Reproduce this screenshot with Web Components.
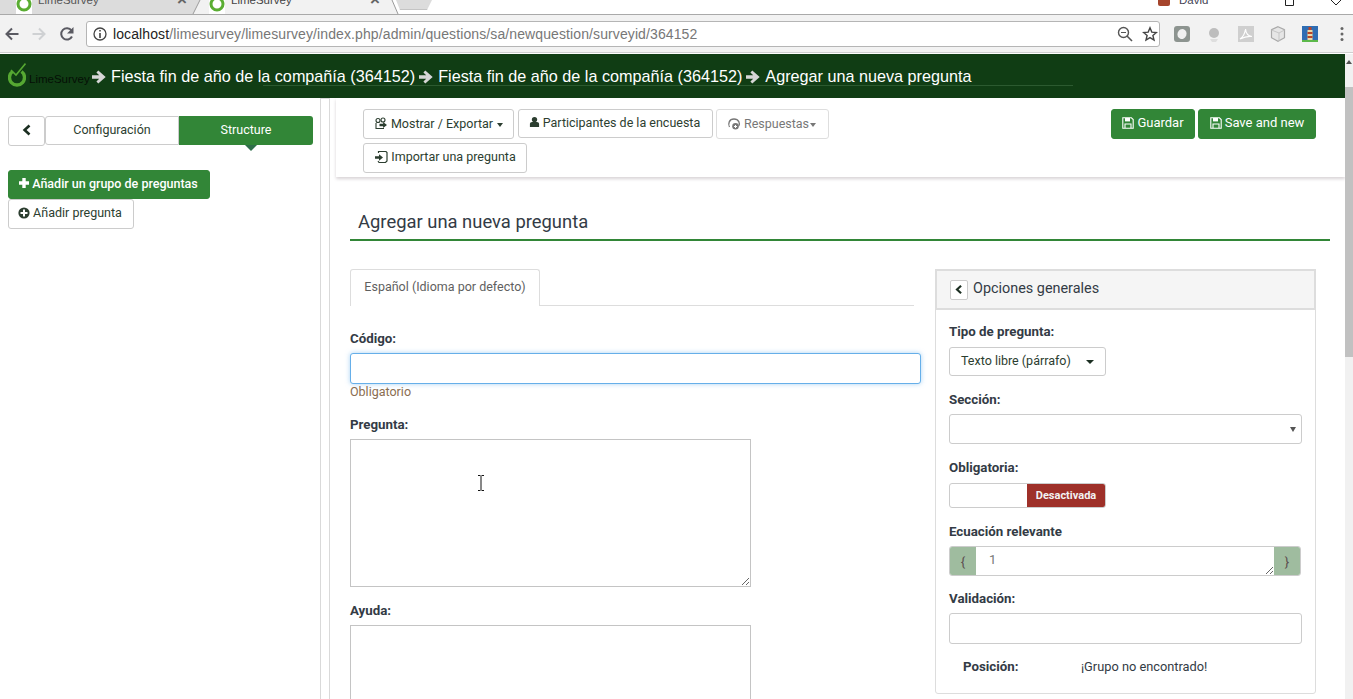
<!DOCTYPE html>
<html lang="es">
<head>
<meta charset="utf-8">
<title>LimeSurvey</title>
<style>
  html, body { margin: 0; height: 699px; overflow: hidden; background: #fff; }
  body { font-family: Roboto, "Liberation Sans", sans-serif; font-size: 14px; color: #333; }
</style>
</head>
<body>
<app-page>
  <browser-chrome></browser-chrome>
  <lime-topbar>
    <span>Fiesta fin de año de la compañía (364152)</span>
    <span>Fiesta fin de año de la compañía (364152)</span>
    <span>Agregar una nueva pregunta</span>
  </lime-topbar>
  <lime-workspace>
    <lime-sidebar slot="side"></lime-sidebar>
    <lime-toolbar slot="main"></lime-toolbar>
    <question-form slot="main"></question-form>
  </lime-workspace>
</app-page>

<script>
const ICONS = {
    arrow: '<svg viewBox="0 0 16 16" width="16" height="16"><path fill="currentColor" d="M1 6.3h7.2L5.4 3.5 7.3 1.6 14.7 8l-7.4 6.4-1.9-1.9 2.8-2.8H1z"/></svg>',
    chevron: '<svg viewBox="0 0 12 12" width="12" height="12"><path fill="none" stroke="currentColor" stroke-width="2.6" d="M8.5 1.5 3.6 6l4.9 4.5"/></svg>',
    plus: '<svg viewBox="0 0 12 12" width="12" height="12"><path fill="currentColor" d="M4.3 1h3.4v3.3H11v3.4H7.7V11H4.3V7.7H1V4.3h3.3z"/></svg>',
    plusCircle: '<svg viewBox="0 0 12 12" width="12" height="12"><circle cx="6" cy="6" r="5.6" fill="currentColor"/><path fill="#fff" d="M5 2.5h2V5h2.5v2H7v2.5H5V7H2.5V5H5z"/></svg>',
    user: '<svg viewBox="0 0 12 12" width="11" height="12"><circle cx="6" cy="3.4" r="2.9" fill="currentColor"/><path fill="currentColor" d="M1 11.5V8.2C1 6.8 2 6 3.4 6h5.2C10 6 11 6.8 11 8.2v3.3z"/></svg>',
    save: '<svg viewBox="0 0 12 12" width="12" height="12"><path fill="none" stroke="currentColor" stroke-width="1.1" d="M.8.8h8.600L11.200 2.600v8.600H.8zM3 11V7h6v4"/><path fill="currentColor" d="M3 1h5v3.400H3z"/></svg>',
    exportIcon: '<svg viewBox="0 0 14 14" width="14" height="14"><g fill="none" stroke="currentColor" stroke-width="1.1"><circle cx="4" cy="3.5" r="2"/><circle cx="9" cy="3" r="2"/><path d="M2 6v5.500h8"/></g><path fill="currentColor" d="M5.500 6.800h3.600V5l3.900 3-3.900 3V9.200H5.500z"/></svg>',
    importIcon: '<svg viewBox="0 0 14 14" width="14" height="14"><path fill="none" stroke="currentColor" stroke-width="1.2" d="M4.500 3V1.500h7.500l1 1v8.500l-1.500 1.500H5L4 11"/><path fill="currentColor" d="M1 6.300h4V4.300l4 3.200-4 3.200V8.700H1z"/></svg>',
    answers: '<svg viewBox="0 0 14 14" width="14" height="14"><path fill="none" stroke="currentColor" stroke-width="1.3" d="M2.500 10C.8 7 2 2 7 2s6.200 4.600 4.800 7"/><circle cx="8.500" cy="9.300" r="3.300" fill="currentColor"/><path fill="none" stroke="#fff" d="M7 9.500h3M8.500 8v3"/></svg>'
};

class AppPage extends HTMLElement {
    connectedCallback() {
        this.attachShadow({ mode: 'open' });
        this.shadowRoot.innerHTML = `
            <style>
                :host { display: flex; flex-direction: column; height: 699px; overflow: hidden; }
                .page { flex: 1; display: flex; min-height: 0; }
                .content { flex: 1; min-width: 0; display: flex; flex-direction: column; }
                .bar { width: 8px; background: #f1f1f1; }
                .up { width: 0; height: 0; margin: 6px auto 0; border: 3px solid transparent; border-top: 0; border-bottom: 4px solid #505050; }
                .thumb { margin-top: 23px; height: 270px; background: #c1c1c1; }
            </style>
            <slot name="chrome"></slot>
            <div class="page">
                <div class="content"><slot></slot></div>
                <div class="bar"><div class="up"></div><div class="thumb"></div></div>
            </div>`;
        this.querySelector('browser-chrome').slot = 'chrome';
    }
}

class BrowserChrome extends HTMLElement {
    connectedCallback() {
        this.attachShadow({ mode: 'open' });
        const favicon = `<svg viewBox="0 0 16 16" width="16" height="16"><rect width="16" height="16" fill="#fff"/><circle cx="8" cy="4" r="6" fill="none" stroke="#5aad32" stroke-width="3"/></svg>`;
        this.shadowRoot.innerHTML = `
            <style>
                :host { display: block; height: 54px; background: #fff; font-family: "Liberation Sans", sans-serif; }
                .strip { height: 14px; display: flex; position: relative; overflow: hidden; border-bottom: 1px solid #a9a9a9; box-sizing: content-box; }
                .tab { flex: none; height: 14px; display: flex; align-items: flex-start; position: relative; font-size: 11.5px; color: #555; }
                .tab span { position: absolute; top: -9px; line-height: 18px; }
                .tab svg { position: absolute; top: 0; }
                .tab b { position: absolute; top: -8px; font-weight: 700; font-size: 17px; color: #666; line-height: 16px; }
                .first { width: 200px; background: #dcdcdc; clip-path: polygon(0 0, 200px 0, 193px 14px, 0 14px); }
                .first span { left: 38px; } .first svg { left: 16px; } .first b { left: 177px; }
                .active { width: 205px; margin-left: -7px; background: #f2f2f2; color: #444; clip-path: polygon(7px 0, 199px 0, 205px 14px, 0 14px); }
                .active span { left: 38px; } .active svg { left: 16px; } .active b { left: 177px; }
                .newtab { width: 36px; height: 9px; margin-left: -2px; background: #dcdcdc; border-radius: 0 0 3px 3px; border-bottom: 1px solid #c4c4c4; clip-path: polygon(0 0, 100% 0, 31px 100%, 4px 100%); }
                .slant { position: absolute; left: 0; top: 0; }
                .user { position: absolute; left: 1158px; top: -7px; display: flex; align-items: center; gap: 9px; font-size: 11.5px; line-height: 14px; color: #445; }
                .user i { width: 12px; height: 12px; background: #a5442c; border-radius: 2px; }
                .win { position: absolute; top: 0; left: 1285px; display: flex; gap: 33px; }
                .tools { height: 37px; background: #f2f2f2; border-bottom: 1px solid #cfcfcf; display: flex; align-items: center; }
                .nav { display: flex; width: 86px; padding-left: 4px; box-sizing: border-box; gap: 11px; }
                .omni { width: 1074px; height: 26px; margin-top: 1px; box-sizing: border-box; background: #fff; border: 1px solid #b5b5b5; border-radius: 3px; display: flex; align-items: center; padding: 0 1px 0 6px; font-size: 14px; }
                .url { flex: 1; margin-left: 6px; color: #777; white-space: nowrap; letter-spacing: .105px; }
                .url em { font-style: normal; color: #222; }
                .omni svg + svg { margin-left: 9px; }
                .ext { display: flex; align-items: center; margin-left: 14px; gap: 16px; }
                .dots { margin-left: 22px; }
            </style>
            <div class="strip">
                <div class="tab first">${favicon}<span>LimeSurvey</span><b>×</b></div>
                <div class="tab active">${favicon}<span>LimeSurvey</span><b>×</b></div>
                <div class="newtab"></div>
                <svg class="slant" width="440" height="14"><path fill="none" stroke="#9a9a9a" d="M200 0 193 14M392 0l6 14"/></svg>
                <div class="user"><i></i><span>David</span></div>
                <div class="win">
                    <svg width="12" height="6"><path fill="none" stroke="#222" d="M.5 0V5.500h8V0"/></svg>
                    <svg width="12" height="6"><path fill="none" stroke="#222" d="M1 0l5 5 5-5"/></svg>
                </div>
            </div>
            <div class="tools">
                <div class="nav">
                    <svg width="16" height="16" viewBox="0 0 16 16"><path fill="none" stroke="#5a5a62" stroke-width="2" d="M14.500 8H2.500M8 2.500 2.500 8 8 13.500"/></svg>
                    <svg width="16" height="16" viewBox="0 0 16 16"><path fill="none" stroke="#cfd1d3" stroke-width="2" d="M1.500 8h12M8 2.500 13.500 8 8 13.500"/></svg>
                    <svg width="16" height="16" viewBox="0 0 16 16" style="margin-left:1px"><path fill="none" stroke="#5a5a62" stroke-width="2" d="M13 10.500A5.700 5.700 0 1 1 12.500 4.500"/><path fill="#5a5a62" d="M14.500 1v6.500H8z"/></svg>
                </div>
                <div class="omni">
                    <svg width="14" height="14" viewBox="0 0 14 14"><circle cx="7" cy="7" r="6" fill="none" stroke="#444" stroke-width="1.3"/><path fill="#444" d="M6.200 3h1.600v1.600H6.200zM6.200 6h1.600v5H6.200z"/></svg>
                    <span class="url"><em>localhost</em>/limesurvey/limesurvey/index.php/admin/questions/sa/newquestion/surveyid/364152</span>
                    <svg width="16" height="16" viewBox="0 0 16 16"><circle cx="6.500" cy="6.500" r="5" fill="none" stroke="#555" stroke-width="1.4"/><path stroke="#555" stroke-width="1.6" d="M10 10l5 5"/><path stroke="#555" d="M4 6.500h5"/></svg>
                    <svg width="16" height="16" viewBox="0 0 16 16"><path fill="none" stroke="#444" stroke-width="1.4" d="M8 1.800l1.800 4.300 4.600.4-3.500 3 1.100 4.500L8 11.600 4 14l1.100-4.500-3.500-3 4.600-.4z"/></svg>
                </div>
                <div class="ext">
                    <svg width="16" height="16" viewBox="0 0 16 16"><rect width="16" height="16" rx="3" fill="#8d9490"/><ellipse cx="8" cy="8" rx="4.500" ry="5" fill="#f0f0f0" transform="rotate(20 8 8)"/></svg>
                    <svg width="16" height="16" viewBox="0 0 16 16"><circle cx="8" cy="7" r="5" fill="#bdbdbd"/><path fill="#dedede" d="M4 13h8l-2 3H6z"/></svg>
                    <svg width="16" height="16" viewBox="0 0 16 16"><rect width="16" height="16" fill="#cfcfcf"/><path fill="none" stroke="#fff" stroke-width="1.2" d="M2 13c3-2 5-6 5.500-10 .3 4 3 7 6.500 7.500-4-.5-8 .5-12 2.500z"/></svg>
                    <svg width="16" height="16" viewBox="0 0 16 16"><path fill="#e6e6e6" stroke="#a9a9a9" stroke-width="1.2" d="M8 .7l6.500 3v8L8 15.300 1.500 11.700v-8z"/><path fill="none" stroke="#c6c6c6" d="M1.500 4 9 7v8M9 7l5.500-3"/></svg>
                    <svg width="16" height="16" viewBox="0 0 16 16"><rect width="16" height="16" fill="#2f6db3"/><rect y="14" width="16" height="2" fill="#5cb84a"/><rect x="5.500" y="4" width="5" height="10" fill="#e9d9a8"/><path fill="#b8452a" d="M5.500 6h5v2h-5zM5.500 10h5v2h-5zM6.500 1h3v3h-3z"/></svg>
                </div>
                <svg class="dots" width="4" height="16" viewBox="0 0 4 16"><g fill="#666"><circle cx="2" cy="2.500" r="1.500"/><circle cx="2" cy="8" r="1.500"/><circle cx="2" cy="13.500" r="1.500"/></g></svg>
            </div>`;
    }
}

class LimeTopbar extends HTMLElement {
    connectedCallback() {
        this.attachShadow({ mode: 'open' });
        // one arrow in front of every crumb, the breadcrumb is slotted
        this.querySelectorAll('span').forEach(crumb => {
            crumb.insertAdjacentHTML('beforebegin', ICONS.arrow);
        });
        this.querySelectorAll('svg').forEach(svg => { svg.style.cssText = 'color:#d6d6d6;flex:none;margin:0 4px 0 3px'; });
        this.shadowRoot.innerHTML = `
            <style>
                :host { display: flex; align-items: center; height: 44px; box-sizing: border-box; padding: 1px 0 0 8px; background: #103d14; color: #fff; font-family: "Liberation Sans", sans-serif; font-size: 16.2px; position: relative; white-space: nowrap; }
                .logo { display: flex; align-items: center; color: #050f06; font-size: 11.5px; width: 80px; flex: none; }
                .logo svg { flex: none; margin-top: -4px; }
                .logo span { margin: 4px 0 0 3px; }
                .crumbs { display: flex; align-items: center; }
                .rule { position: absolute; left: 263px; width: 810px; top: 31px; height: 1px; background: #2c5a30; }
            </style>
            <div class="logo">
                <svg width="18" height="26" viewBox="0 0 18 26">
                    <path fill="none" stroke="#56a832" stroke-width="3.4" d="M4.500 9.500a7.500 7.500 0 1 0 9 0"/>
                    <path fill="none" stroke="#56a832" stroke-width="1.600" d="M3 8l5 5L17.500 1.500"/>
                </svg>
                <span>LimeSurvey</span>
            </div>
            <div class="crumbs"><slot></slot></div>
            <div class="rule"></div>`;
    }
}

class LimeWorkspace extends HTMLElement {
    connectedCallback() {
        this.attachShadow({ mode: 'open' });
        this.shadowRoot.innerHTML = `
            <style>
                :host { display: flex; flex: 1; min-height: 0; }
                .side { width: 320px; flex: none; box-sizing: border-box; }
                .split { width: 10px; flex: none; border: solid #d9d9d9; border-width: 1px 1px 0; box-sizing: border-box; }
                .main { flex: 1; min-width: 0; padding-left: 6px; }
            </style>
            <div class="side"><slot name="side"></slot></div>
            <div class="split"></div>
            <div class="main"><slot name="main"></slot></div>`;
    }
}

class LimeBtn extends HTMLElement {
    connectedCallback() {
        this.attachShadow({ mode: 'open' });
        this.shadowRoot.innerHTML = `
            <style>
                :host { display: inline-flex; align-items: center; justify-content: center; box-sizing: border-box; height: var(--h, 30px); padding: 0 var(--pr, 0px) var(--pb, 3px) 0; border: 1px solid #ccc; border-radius: 3px; background: #fff; color: #2c3e30; font-size: 12.5px; white-space: nowrap; gap: 3px; }
                :host([primary]) { background: #328637; border-color: #328637; color: #fff; }
                :host([disabled]) { color: #777; border-color: #dedede; }
                ::slotted(svg) { flex: none; }
            </style>
            <slot></slot>`;
    }
}

class LimeSidebar extends HTMLElement {
    connectedCallback() {
        this.attachShadow({ mode: 'open' });
        this.shadowRoot.innerHTML = `
            <style>
                :host { display: block; padding: 18px 7px 0 8px; }
                .tabs { display: flex; }
                .back { width: 37px; --h: 30px; color: #1c2f22; }
                .seg { width: 134px; height: 29px; box-sizing: border-box; padding-bottom: 2px; display: flex; align-items: center; justify-content: center; font-size: 12.5px; }
                .conf { border: 1px solid #ccc; border-radius: 3px 0 0 3px; color: #2c3e30; }
                .struct { background: #328637; color: #fff; border-radius: 0 3px 3px 0; position: relative; }
                .struct::after { content: ""; position: absolute; left: 66px; top: 29px; border: 6px solid transparent; border-bottom: 0; border-top-color: #2f6e4a; }
                .stack { display: flex; flex-direction: column; align-items: flex-start; margin-top: 24px; }
                .add { --h: 29px; --pr: 2px; width: 202px; gap: 2px; font-weight: 500; }
                .addq { --h: 30px; --pr: 2px; width: 126px; }
            </style>
            <div class="tabs">
                <lime-btn class="back">${ICONS.chevron}</lime-btn>
                <div class="seg conf">Configuración</div>
                <div class="seg struct">Structure</div>
            </div>
            <div class="stack">
                <lime-btn primary class="add">${ICONS.plus}<span>Añadir un grupo de preguntas</span></lime-btn>
                <lime-btn class="addq">${ICONS.plusCircle}<span>Añadir pregunta</span></lime-btn>
            </div>`;
    }
}

class LimeToolbar extends HTMLElement {
    connectedCallback() {
        this.attachShadow({ mode: 'open' });
        const caret = '<i style="width:0;height:0;border:3.5px solid transparent;border-bottom:0;border-top:4px solid currentColor;margin:2px 0 0 1px"></i>';
        this.shadowRoot.innerHTML = `
            <style>
                :host { display: flex; justify-content: space-between; height: 79px; box-sizing: border-box; padding: 11px 29px 0 27px; box-shadow: 0 2px 3px rgba(120,100,110,.28); }
                .left { display: flex; flex-wrap: wrap; align-content: flex-start; gap: 4px; width: 480px; }
                .right { display: flex; gap: 3px; align-items: flex-start; }
                .right lime-btn { font-size: 13px; }
            </style>
            <div class="left">
                <lime-btn style="width:151px;--pb:1px">${ICONS.exportIcon}<span>Mostrar / Exportar</span>${caret}</lime-btn>
                <lime-btn style="width:195px;--h:29px;--pr:2px">${ICONS.user}<span>Participantes de la encuesta</span></lime-btn>
                <lime-btn disabled style="width:113px;margin-left:-1px;--pb:1px;--pr:2px">${ICONS.answers}<span style="margin-right:-3px">Respuestas</span>${caret}</lime-btn>
                <lime-btn style="width:164px">${ICONS.importIcon}<span>Importar una pregunta</span></lime-btn>
            </div>
            <div class="right">
                <lime-btn primary style="width:84px">${ICONS.save}<span>Guardar</span></lime-btn>
                <lime-btn primary style="width:118px">${ICONS.save}<span>Save and new</span></lime-btn>
            </div>`;
    }
}

class FormField extends HTMLElement {
    connectedCallback() {
        this.attachShadow({ mode: 'open' });
        this.shadowRoot.innerHTML = `
            <style>
                :host { display: block; }
                label { display: block; font-weight: 700; font-size: 13.3px; line-height: 16px; color: #333b45; padding-top: var(--nudge, 0); margin-bottom: var(--gap, 6px); }
            </style>
            <label>${this.getAttribute('label')}</label>
            <slot></slot>`;
    }
}

class QuestionForm extends HTMLElement {
    connectedCallback() {
        this.attachShadow({ mode: 'open' });
        this.shadowRoot.innerHTML = `
            <style>
                :host { display: block; padding: 0 15px 0 14px; position: relative; }
                h1 { margin: 0; height: 64px; box-sizing: border-box; padding: 34px 0 0 8px; font-size: 18.4px; line-height: 22px; font-weight: 400; color: #333b45; border-bottom: 2px solid #328637; }
                .cols { display: flex; margin-top: 28px; align-items: flex-start; }
                .left { width: 571px; flex: none; }
                .right { margin-left: 14px; width: 381px; flex: none; }
                .tabline { width: 564px; height: 37px; box-sizing: border-box; border-bottom: 1px solid #ddd; }
                .tab { display: inline-block; width: 190px; height: 37px; box-sizing: border-box; border: 1px solid #ddd; border-bottom: 0; border-radius: 3px 3px 0 0; background: #fff; font-size: 12.5px; line-height: 34px; text-align: center; color: #5f5f5f; }
                .code { margin-top: 25px; }
                input, textarea { display: block; box-sizing: border-box; background: #fff; border: 1px solid #ccc; border-radius: 0; margin: 0; outline: 0; }
                .code input { width: 571px; height: 31px; border-color: #66afe9; border-radius: 3px; box-shadow: 0 0 5px rgba(102,175,233,.55); }
                .hint { font-size: 12.5px; line-height: 15px; color: #8a6d50; }
                .q { margin-top: 18px; }
                .help { margin-top: 16px; }
                textarea { width: 401px; height: 148px; border: 1px solid #c4c4c4; resize: vertical; }
                .cursor { position: absolute; left: 141px; top: 298px; pointer-events: none; }
            </style>
            <h1>Agregar una nueva pregunta</h1>
            <div class="cols">
                <div class="left">
                    <div class="tabline"><div class="tab">Español (Idioma por defecto)</div></div>
                    <form-field class="code" label="Código:"><input type="text"></form-field>
                    <div class="hint">Obligatorio</div>
                    <form-field class="q" label="Pregunta:"><textarea></textarea></form-field>
                    <form-field class="help" label="Ayuda:"><textarea></textarea></form-field>
                </div>
                <div class="right"><options-panel></options-panel></div>
            </div>
            <svg class="cursor" width="8" height="16" viewBox="0 0 8 16"><path fill="none" stroke="#111" d="M1 .5h2.500M4.500.5H7M4 1v14M1 15.500h2.500M4.500 15.500H7"/></svg>`;
    }
}

class OptionsPanel extends HTMLElement {
    connectedCallback() {
        this.attachShadow({ mode: 'open' });
        this.shadowRoot.innerHTML = `
            <style>
                :host { display: block; box-sizing: border-box; height: 425px; border: 1px solid #ddd; border-radius: 3px; }
                .head { height: 41px; box-sizing: border-box; background: #f5f5f5; border: solid #ddd; border-width: 2px 2px 2px; display: flex; align-items: center; padding: 0 0 3px 13px; font-size: 14.4px; color: #333b45; gap: 5px; margin: -1px -1px 0; }
                .toggle { width: 18px; height: 20px; margin-top: 3px; box-sizing: border-box; background: #fff; border: 1px solid #ccc; border-radius: 2px; display: flex; align-items: center; justify-content: center; color: #1c2f22; }
                .toggle svg { width: 10px; height: 11px; }
                .body { padding: 13px 13px 0; display: flex; flex-direction: column; gap: 14px; --gap: 7px; --nudge: 1px; }
                .drop { width: 157px; height: 29px; box-sizing: border-box; border: 1px solid #ccc; border-radius: 3px; display: flex; align-items: center; padding: 0 11px 2px; justify-content: space-between; font-size: 12.5px; color: #2c3e30; }
                i.caret { width: 0; height: 0; border: 4px solid transparent; border-bottom: 0; border-top-color: #1c2f22; margin-top: 2px; }
                .select { width: 353px; height: 30px; box-sizing: border-box; border: 1px solid #ccc; border-radius: 3px; display: flex; align-items: center; justify-content: flex-end; padding-right: 5px; }
                .select i { width: 0; height: 0; border: 3px solid transparent; border-bottom: 0; border-top: 5px solid #555; }
                .switch { width: 157px; height: 25px; box-sizing: border-box; border: 1px solid #ccc; border-radius: 3px; display: flex; justify-content: flex-end; overflow: hidden; }
                .switch span { width: 78px; background: #9e3029; color: #f2f2f2; font-size: 11px; font-weight: 700; display: flex; align-items: center; justify-content: center; }
                .eq { width: 352px; height: 30px; display: flex; box-sizing: border-box; border: 1px solid #ccc; border-radius: 3px; overflow: hidden; }
                .eq span { width: 26px; flex: none; background: #9fbc9f; color: #5d4f50; display: flex; align-items: center; justify-content: center; font-size: 13px; }
                .eq textarea { flex: 1; min-width: 0; height: 28px; box-sizing: border-box; background: #fff; border: 0; outline: 0; padding: 5px 13px 3px; resize: both; font: 13px/16px Roboto, "Liberation Sans", sans-serif; color: #777; overflow: hidden; }
                .valid { width: 353px; height: 31px; display: block; box-sizing: border-box; border: 1px solid #ccc; border-radius: 3px; outline: 0; margin: 0; }
                .pos { display: flex; padding: 1px 0 0 14px; font-size: 12.8px; line-height: 16px; color: #333b45; }
                .pos b { width: 118px; font-size: 13.3px; }
                .low { --nudge: 2px; --gap: 6px; }
            </style>
            <div class="head"><span class="toggle">${ICONS.chevron}</span>Opciones generales</div>
            <div class="body">
                <form-field label="Tipo de pregunta:"><div class="drop">Texto libre (párrafo)<i class="caret"></i></div></form-field>
                <form-field class="low" label="Sección:"><div class="select"><i></i></div></form-field>
                <form-field label="Obligatoria:" style="margin-top:1px"><div class="switch"><span>Desactivada</span></div></form-field>
                <form-field class="low" label="Ecuación relevante"><div class="eq"><span>{</span><textarea>1</textarea><span>}</span></div></form-field>
                <form-field class="low" label="Validación:" style="margin-top:-1px"><input class="valid" type="text"></form-field>
                <div class="pos"><b>Posición:</b><span>¡Grupo no encontrado!</span></div>
            </div>`;
    }
}

customElements.define('app-page', AppPage);
customElements.define('browser-chrome', BrowserChrome);
customElements.define('lime-topbar', LimeTopbar);
customElements.define('lime-workspace', LimeWorkspace);
customElements.define('lime-btn', LimeBtn);
customElements.define('lime-sidebar', LimeSidebar);
customElements.define('lime-toolbar', LimeToolbar);
customElements.define('form-field', FormField);
customElements.define('question-form', QuestionForm);
customElements.define('options-panel', OptionsPanel);
</script>
</body>
</html>
